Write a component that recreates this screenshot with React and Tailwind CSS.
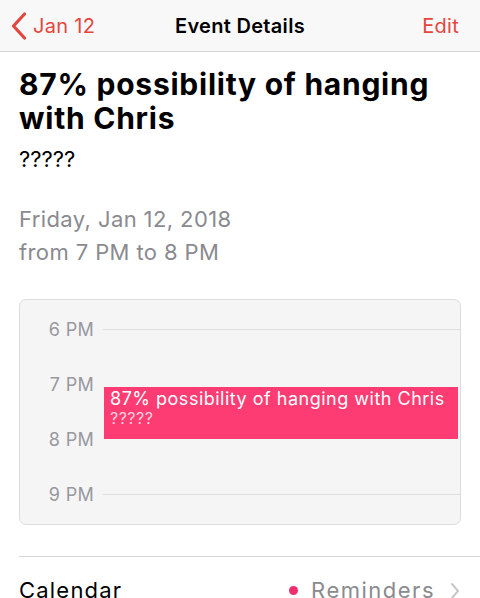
export default function App() {
  const font = { fontFamily: 'Inter, "Liberation Sans", Arial, sans-serif' };
  return (
    <div className="w-[480px] h-[598px] overflow-hidden bg-white" style={font}>
      <div className="h-[52px] bg-[#f8f8f8] border-b border-[#d6d6d6] grid grid-cols-[1fr_auto_1fr] items-center">
        <div className="flex items-center pl-[11px]">
          <svg width="16" height="28" viewBox="0 0 16 28" className="mr-[6px]">
            <path d="M13.5 2 L2.5 14 L13.5 26" fill="none" stroke="#e4463e" strokeWidth="3.2" strokeLinecap="round" strokeLinejoin="round" />
          </svg>
          <span className="text-[20px] text-[#e4463e] tracking-[0.3px]">Jan 12</span>
        </div>
        <div className="text-[20px] font-semibold text-black tracking-[0.3px]">Event Details</div>
        <div className="flex justify-end pr-[21px]">
          <span className="text-[20px] text-[#e4463e] tracking-[0.3px]">Edit</span>
        </div>
      </div>

      <div className="px-[19px] pt-[15px]">
        <h1 className="text-[30px] font-bold leading-[34px] text-black tracking-[0.75px]">
          87% possibility of hanging with Chris
        </h1>
        <div className="text-[22px] leading-[26px] text-black mt-[11px]">?????</div>
        <div className="mt-[31px] text-[22px] leading-[33px] text-[#8a8a8f] tracking-[0.4px]">
          <div>Friday, Jan 12, 2018</div>
          <div>from 7 PM to 8 PM</div>
        </div>
      </div>

      <div className="mx-[19px] mt-[30px] h-[226px] rounded-[7px] border border-[#dcdcdc] bg-[#f5f5f6] relative pt-[2px]">
        {["6 PM", "7 PM", "8 PM", "9 PM"].map((h, i) => (
          <div key={h} className="h-[55px] flex items-center">
            <div className="w-[74px] text-right text-[18px] text-[#98989d] tracking-[0.3px]">{h}</div>
            {i === 0 || i === 3 ? (
              <div className="flex-1 ml-[9px] h-px bg-[#dedede]" />
            ) : (
              <div className="flex-1" />
            )}
          </div>
        ))}
        <div className="absolute left-[84px] top-[87px] w-[354px] h-[52px] bg-[#fc3c72] pl-[6px] pt-[1px]">
          <div className="text-[18px] leading-[21px] text-white tracking-[0.5px]">87% possibility of hanging with Chris</div>
          <div className="text-[16px] leading-[19px] text-[#ffd3df] tracking-[0.5px]">?????</div>
        </div>
      </div>

      <div className="ml-[19px] mt-[31px] border-t border-[#d6d6d6] flex items-center justify-between pr-[20px] pt-[17px]">
        <span className="text-[22px] text-black tracking-[1.2px]">Calendar</span>
        <div className="flex items-center">
          <span className="w-[9px] h-[9px] rounded-full bg-[#ee2e6a] mr-[13px]" />
          <span className="text-[22px] text-[#8a8a8f] tracking-[1.5px]">Reminders</span>
          <svg width="10" height="18" viewBox="0 0 10 18" className="ml-[15px]">
            <path d="M2 2 L8 9 L2 16" fill="none" stroke="#c7c7cc" strokeWidth="2" strokeLinecap="round" strokeLinejoin="round" />
          </svg>
        </div>
      </div>
    </div>
  );
}
